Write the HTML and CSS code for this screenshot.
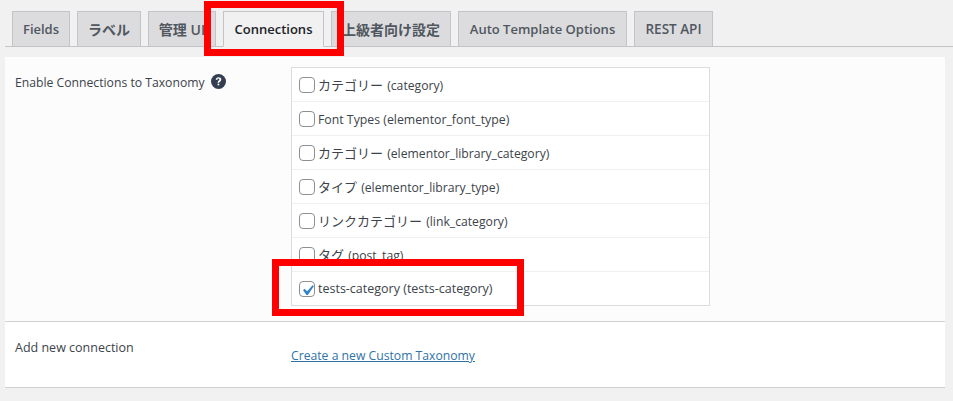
FILE: index.html
```html
<!DOCTYPE html>
<html lang="ja">
<head>
<meta charset="utf-8">
<title>Connections</title>
<link rel="stylesheet" href="styles.css">
</head>
<body>
<nav class="tabs">
  <a class="tab">Fields</a>
  <a class="tab ja">ラベル</a>
  <a class="tab ja">管理 UI</a>
  <a class="tab active">Connections</a>
  <a class="tab ja">上級者向け設定</a>
  <a class="tab">Auto Template Options</a>
  <a class="tab rest">REST API</a>
</nav>
<main class="panel">
  <section class="row row-tax">
    <div class="label label-tax">Enable Connections to Taxonomy
      <svg class="help" viewBox="0 0 20 20" width="15" height="15" aria-hidden="true"><circle cx="10" cy="10" r="10" fill="#333f50"/><path d="M6.300 7.600c.1-2.100 1.600-3.400 3.800-3.400 2.100 0 3.600 1.200 3.600 3 0 2.600-2.700 2.600-2.700 4.600H8.800c0-3.200 2.400-3.100 2.400-4.500 0-.7-.5-1.200-1.200-1.200-.8 0-1.300.6-1.400 1.500z" fill="#fff"/><rect x="8.800" y="12.800" width="2.200" height="2.300" fill="#fff"/></svg>
    </div>
    <ul class="checklist">
      <li><label><span class="box"></span><span><span class="ja">カテゴリー</span> (category)</span></label></li>
      <li><label class="latin"><span class="box"></span><span>Font Types (elementor_font_type)</span></label></li>
      <li><label><span class="box"></span><span><span class="ja">カテゴリー</span> (elementor_library_category)</span></label></li>
      <li><label><span class="box"></span><span><span class="ja">タイプ</span> (elementor_library_type)</span></label></li>
      <li><label><span class="box"></span><span><span class="ja">リンクカテゴリー</span> (link_category)</span></label></li>
      <li><label><span class="box"></span><span><span class="ja">タグ</span> (post_tag)</span></label></li>
      <li><label class="tests"><span class="box checked"><svg viewBox="0 0 20 20" width="21" height="21" aria-hidden="true"><path d="M14.830 4.890l1.340.94-5.810 8.380H9.020L5.780 9.670l1.340-1.250 2.570 2.400z" fill="#3582c4"/></svg></span><span>tests-category (tests-category)</span></label></li>
    </ul>
  </section>
  <section class="row row-add">
    <div class="label">Add new connection</div>
    <a class="create" href="#">Create a new Custom Taxonomy</a>
  </section>
</main>
<div class="mark mark-tab"></div>
<div class="mark mark-item"></div>
</body>
</html>
```

FILE: styles.css
```css
* { box-sizing: border-box; }
html, body { margin: 0; padding: 0; }
body {
  position: relative;
  width: 953px;
  height: 401px;
  overflow: hidden;
  background: #f1f1f1;
  color: #3c434a;
  font-family: "Open Sans", "Noto Sans CJK JP", sans-serif;
  font-size: 12.500px;
}
.ja { font-size: 13px; margin-right: 1px; }
.tabs {
  display: flex;
  gap: 7px;
  height: 47px;
  margin-left: 5px;
  padding: 11px 0 0 7px;
  border-bottom: 1px solid #c3c4c7;
}
.tab {
  display: flex;
  align-items: center;
  justify-content: center;
  height: 36px;
  border: 1px solid #c3c4c7;
  background: #dcdcde;
  color: #50575e;
  font-weight: 600;
  font-size: 13px;
}
.tab.ja { font-size: 14px; margin-right: 0; }
.tab.rest { font-size: 13.500px; }
.tab:nth-child(1) { width: 58px; }
.tab:nth-child(2) { width: 64px; }
.tab:nth-child(3) { width: 68px; }
.tab:nth-child(4) { width: 101px; }
.tab:nth-child(5) { width: 120px; }
.tab:nth-child(6) { width: 169px; }
.tab:nth-child(7) { width: 79px; }
.tab.active {
  background: #f1f1f1;
  border-bottom-color: #f1f1f1;
  color: #1d2327;
}
.panel {
  margin: 10px 8px 0 5px;
  background: #fff;
}
.row {
  display: grid;
  grid-template-columns: 276px 419px;
  padding: 0 0 0 10px;
  border-bottom: 1px solid #d0d1d4;
}
.row-tax { height: 265px; padding-top: 10px; background: #fcfcfc; }
.row-add { height: 66px; padding-top: 15px; }
.label { padding-top: 7px; }
.label-tax { font-size: 12.200px; }
.row-add .label { padding-top: 2px; }
.help { vertical-align: -2px; margin-left: 3px; }
.checklist {
  list-style: none;
  margin: 0;
  padding: 0;
  height: 239px;
  background: #fff;
  border: 1px solid #dcdcde;
  font-size: 12.200px;
}
.checklist li {
  height: 34px;
  border-bottom: 1px solid #f0f0f1;
}
.checklist li:last-child { border-bottom: 0; }
.checklist label {
  display: flex;
  align-items: center;
  gap: 3px;
  height: 100%;
  padding-left: 7px;
}
.checklist .latin { font-size: 12.300px; }
.checklist .latin > span:last-child { margin-top: 1px; }
.checklist .tests { font-size: 12.500px; }
.checklist .tests > span:last-child { margin-top: -1px; }
.box {
  flex: none;
  width: 16px;
  height: 16px;
  background: #fff;
  border: 1px solid #8c8f94;
  border-radius: 4px;
}
.box svg { display: block; margin: -2px 0 0 -3px; }
.create {
  margin-top: 10px;
  align-self: start;
  color: #2f72a8;
  font-size: 12.200px;
  text-decoration: underline;
}
.mark {
  position: absolute;
  border: 7px solid #ff0000;
}
.mark-tab { left: 204px; top: 1px; width: 140px; height: 55px; }
.mark-item { left: 272px; top: 259px; width: 252px; height: 57px; }
```
